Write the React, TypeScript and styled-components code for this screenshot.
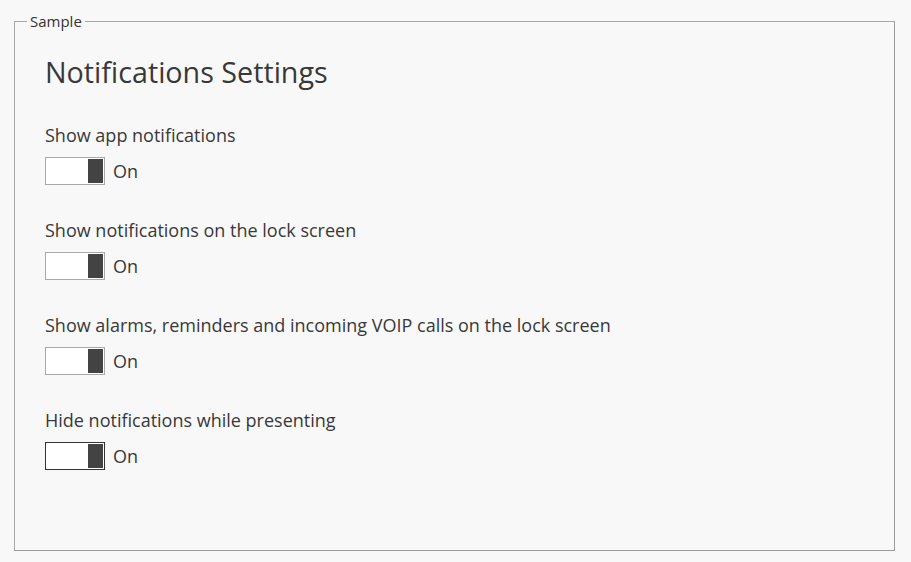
import { useState } from 'react'
import styled, { createGlobalStyle } from 'styled-components'

const GlobalStyle = createGlobalStyle`
  html, body {
    margin: 0;
    padding: 0;
    background: #f8f8f8;
  }
  body {
    font-family: 'Open Sans', 'Noto Sans', sans-serif;
    color: #333;
  }
`

const settings = [
  'Show app notifications',
  'Show notifications on the lock screen',
  'Show alarms, reminders and incoming VOIP calls on the lock screen',
  'Hide notifications while presenting',
]

function App() {
  const [values, setValues] = useState<boolean[]>(settings.map(() => true))

  const toggle = (i: number) => {
    setValues((prev) => prev.map((v, idx) => (idx === i ? !v : v)))
  }

  return (
    <>
      <GlobalStyle />
      <Frame>
        <Legend>Sample</Legend>
        <Title>Notifications Settings</Title>
        <List>
          {settings.map((label, i) => (
            <Setting key={label}>
              <Label>{label}</Label>
              <SwitchRow>
                <Switch $on={values[i]} $focused={i === settings.length - 1} onClick={() => toggle(i)}>
                  <Thumb $on={values[i]} />
                </Switch>
                <State>{values[i] ? 'On' : 'Off'}</State>
              </SwitchRow>
            </Setting>
          ))}
        </List>
      </Frame>
    </>
  )
}

export default App

const Frame = styled.fieldset`
  box-sizing: border-box;
  margin: 11px 16px 0 14px;
  height: 540px;
  padding: 0 30px;
  border: 1px solid #a8a8a8;
  border-right-color: #9c9c9c;
  border-bottom-color: #9c9c9c;
`

const Legend = styled.legend`
  padding: 0 3px;
  margin-left: -18px;
  font-size: 15px;
  line-height: 20px;
  color: #333;
`

const Title = styled.h1`
  margin: 22px 0 0;
  font-size: 28.7px;
  font-weight: 400;
  line-height: 38px;
  color: #383838;
`

const List = styled.div`
  display: flex;
  flex-direction: column;
  gap: 33px;
  margin-top: 32px;
`

const Setting = styled.div`
  display: flex;
  flex-direction: column;
  gap: 10px;
`

const Label = styled.div`
  font-size: 18px;
  line-height: 24px;
  color: #383838;
`

const SwitchRow = styled.div`
  display: flex;
  align-items: center;
  gap: 8px;
`

const Switch = styled.button<{ $on: boolean; $focused: boolean }>`
  box-sizing: border-box;
  display: flex;
  justify-content: ${(p) => (p.$on ? 'flex-end' : 'flex-start')};
  width: 60px;
  height: 28px;
  padding: 1px;
  background: #fff;
  border: 1px solid ${(p) => (p.$focused ? '#333' : '#a8a8a8')};
  cursor: pointer;
`

const Thumb = styled.span<{ $on: boolean }>`
  width: 15px;
  height: 100%;
  background: #434343;
`

const State = styled.span`
  font-size: 18px;
  line-height: 24px;
  color: #383838;
`
